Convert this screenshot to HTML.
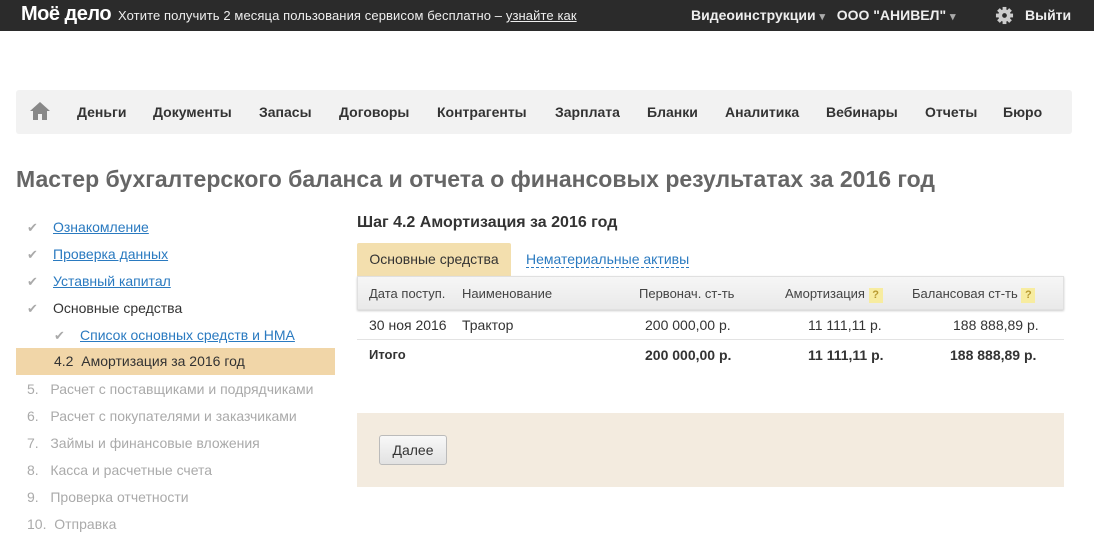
<!DOCTYPE html>
<html><head><meta charset="utf-8"><style>
*{margin:0;padding:0;box-sizing:border-box}
body{width:1094px;height:551px;overflow:hidden;background:#fff;font-family:"Liberation Sans",Arial,sans-serif;font-size:14px;color:#333;position:relative}
.abs{position:absolute;white-space:nowrap}
.top{position:absolute;left:0;top:0;width:1094px;height:31px;background:#2b2b2b;color:#fff}
.nav{position:absolute;left:16px;top:90px;width:1056px;height:44px;background:#f2f2f2;border-radius:3px}
.nav span{position:absolute;top:14px;font-weight:bold;font-size:14px;color:#333}
a{color:#2a7ac0;text-decoration:underline}
.side div{position:absolute;left:0;height:27px;line-height:27px;width:335px;font-size:14px}
.chk{position:absolute;color:#aaa;font-size:13px}
.gray{color:#aaa}
</style></head><body>
<div class="top">
  <div class="abs" style="left:21px;top:3px;font-size:20px;font-weight:bold;letter-spacing:-0.5px">Моё дело</div>
  <div class="abs" style="left:118px;top:8px;font-size:13px;color:#eee;letter-spacing:0.1px">Хотите получить 2 месяца пользования сервисом бесплатно – <span style="text-decoration:underline">узнайте как</span></div>
  <div class="abs" style="left:691px;top:7px;font-size:14px;font-weight:bold;color:#eee">Видеоинструкции <span style="font-size:11px;color:#aaa">▾</span>&nbsp;&nbsp; ООО "АНИВЕЛ" <span style="font-size:11px;color:#aaa">▾</span></div>
  <svg class="abs" style="left:995px;top:6px" width="19" height="19" viewBox="0 0 20 20"><g fill="#ccc"><circle cx="10" cy="10" r="6.5"/><rect x="8" y="1" width="4" height="18"/><rect x="1" y="8" width="18" height="4"/><rect x="8" y="1" width="4" height="18" transform="rotate(45 10 10)"/><rect x="8" y="1" width="4" height="18" transform="rotate(-45 10 10)"/></g><circle cx="10" cy="10" r="2.5" fill="#2b2b2b"/></svg>
  <div class="abs" style="left:1025px;top:7px;font-size:14px;font-weight:bold;color:#eee">Выйти</div>
</div>
<div class="nav">
  <svg class="abs" style="left:13px;top:11px" width="22" height="20" viewBox="0 0 22 20"><path d="M11 1 L21 10 L18 10 L18 19 L13 19 L13 13 L9 13 L9 19 L4 19 L4 10 L1 10 Z" fill="#888"/></svg>
  <span style="left:61px">Деньги</span><span style="left:137px">Документы</span><span style="left:243px">Запасы</span><span style="left:323px">Договоры</span><span style="left:421px">Контрагенты</span><span style="left:539px">Зарплата</span><span style="left:631px">Бланки</span><span style="left:709px">Аналитика</span><span style="left:810px">Вебинары</span><span style="left:909px">Отчеты</span><span style="left:987px">Бюро</span>
</div>
<div class="abs" style="left:16px;top:166px;font-size:23px;font-weight:bold;color:#666">Мастер бухгалтерского баланса и отчета о финансовых результатах за 2016 год</div>
<div class="side" style="position:absolute;left:16px;top:1px">
  <div style="top:213px"><span class="chk" style="left:11px">✔</span><a style="margin-left:37px">Ознакомление</a></div>
  <div style="top:240px"><span class="chk" style="left:11px">✔</span><a style="margin-left:37px">Проверка данных</a></div>
  <div style="top:267px"><span class="chk" style="left:11px">✔</span><a style="margin-left:37px">Уставный капитал</a></div>
  <div style="top:294px"><span class="chk" style="left:11px">✔</span><span style="margin-left:37px">Основные средства</span></div>
  <div style="top:321px"><span class="chk" style="left:38px">✔</span><a style="margin-left:64px">Список основных средств и НМА</a></div>
  <div style="top:347px;background:#f1d6a8;width:319px"><span style="margin-left:38px">4.2&nbsp; Амортизация за 2016 год</span></div>
  <div class="gray" style="top:375px"><span style="margin-left:11px">5.&nbsp;&nbsp; Расчет с поставщиками и подрядчиками</span></div>
  <div class="gray" style="top:402px"><span style="margin-left:11px">6.&nbsp;&nbsp; Расчет с покупателями и заказчиками</span></div>
  <div class="gray" style="top:429px"><span style="margin-left:11px">7.&nbsp;&nbsp; Займы и финансовые вложения</span></div>
  <div class="gray" style="top:456px"><span style="margin-left:11px">8.&nbsp;&nbsp; Касса и расчетные счета</span></div>
  <div class="gray" style="top:483px"><span style="margin-left:11px">9.&nbsp;&nbsp; Проверка отчетности</span></div>
  <div class="gray" style="top:510px"><span style="margin-left:11px">10.&nbsp; Отправка</span></div>
</div>
<div class="abs" style="left:357px;top:214px;font-size:16px;font-weight:bold;color:#333">Шаг 4.2 Амортизация за 2016 год</div>
<div class="abs" style="left:357px;top:243px;width:154px;height:33px;background:#f3dfae;border-radius:2px 2px 0 0;line-height:33px;text-align:center;font-size:14px">Основные средства</div>
<div class="abs" style="left:526px;top:251px;font-size:14px;color:#2a7ac0;border-bottom:1px dashed #2a7ac0;line-height:16px">Нематериальные активы</div>
<div class="abs" style="left:357px;top:276px;width:707px;height:34px;background:linear-gradient(#f6f6f6,#e9e9e9);border:1px solid #e0e0e0;box-shadow:0 1px 2px #ccc"></div>
<div class="abs" style="left:369px;top:286px;font-size:13px;color:#444">Дата поступ.</div>
<div class="abs" style="left:462px;top:286px;font-size:13px;color:#444">Наименование</div>
<div class="abs" style="left:639px;top:286px;font-size:13px;color:#444">Первонач. ст-ть</div>
<div class="abs" style="left:785px;top:286px;font-size:13px;color:#444">Амортизация <span style="display:inline-block;width:14px;height:15px;background:#f7eca0;color:#b89a30;text-align:center;font-size:11px;line-height:15px;font-weight:bold">?</span></div>
<div class="abs" style="left:912px;top:286px;font-size:13px;color:#444">Балансовая ст-ть <span style="display:inline-block;width:14px;height:15px;background:#f7eca0;color:#b89a30;text-align:center;font-size:11px;line-height:15px;font-weight:bold">?</span></div>
<div class="abs" style="left:369px;top:317px;font-size:14px">30 ноя 2016</div>
<div class="abs" style="left:462px;top:317px;font-size:14px">Трактор</div>
<div class="abs" style="left:645px;top:317px;font-size:14px">200 000,00 р.</div>
<div class="abs" style="left:808px;top:317px;font-size:14px">11 111,11 р.</div>
<div class="abs" style="left:953px;top:317px;font-size:14px">188 888,89 р.</div>
<div class="abs" style="left:357px;top:339px;width:707px;height:1px;background:#e3e3e3"></div>
<div class="abs" style="left:369px;top:347px;font-size:13px;font-weight:bold">Итого</div>
<div class="abs" style="left:645px;top:347px;font-size:14px;font-weight:bold">200 000,00 р.</div>
<div class="abs" style="left:808px;top:347px;font-size:14px;font-weight:bold">11 111,11 р.</div>
<div class="abs" style="left:950px;top:347px;font-size:14px;font-weight:bold">188 888,89 р.</div>
<div class="abs" style="left:357px;top:413px;width:707px;height:74px;background:#f3ebdf"></div>
<div class="abs" style="left:379px;top:435px;width:68px;height:30px;border:1px solid #bbb;border-radius:3px;background:linear-gradient(#f8f8f8,#e2e2e2);text-align:center;line-height:28px;font-size:14px">Далее</div>
</body></html>
